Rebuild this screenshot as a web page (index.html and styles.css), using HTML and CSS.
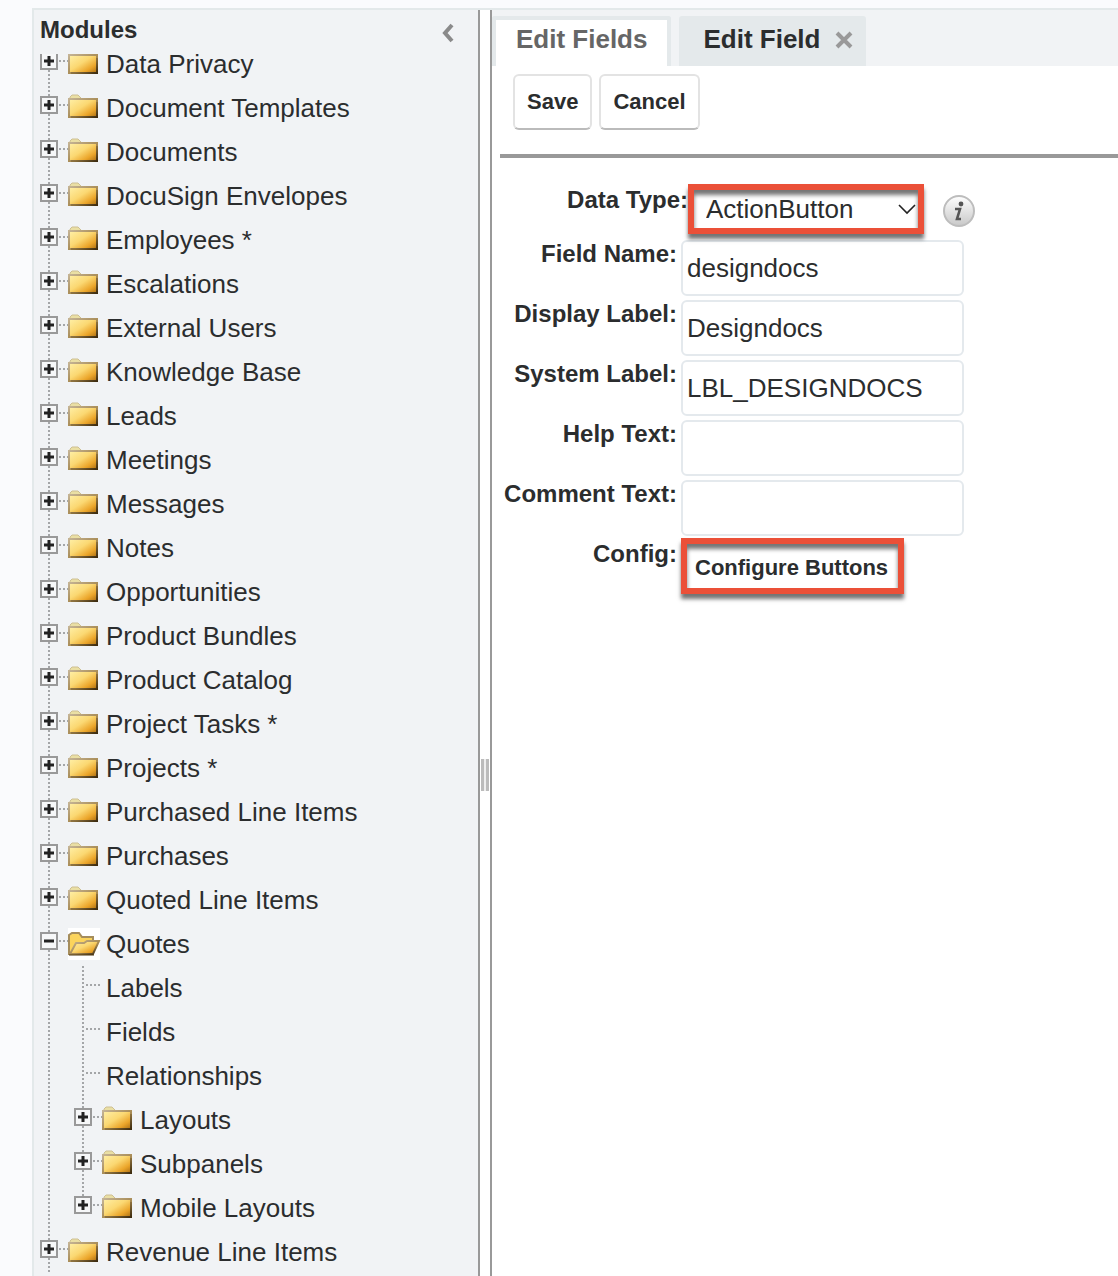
FILE: index.html
```html
<!DOCTYPE html>
<html lang="en">
<head>
    <meta charset="UTF-8">
    <meta name="viewport" content="width=device-width, initial-scale=1.0">
    <title>Studio - Edit Field</title>
    <link rel="stylesheet" href="styles.css">
</head>
<body>
    <!-- Shared tree icons -->
    <svg class="sprites" aria-hidden="true">
        <defs>
            <linearGradient id="gold" x1="0" y1="0" x2="1" y2="1">
                <stop offset="0" stop-color="#fff0a8"/>
                <stop offset="0.45" stop-color="#fbd872"/>
                <stop offset="0.75" stop-color="#eba52a"/>
                <stop offset="1" stop-color="#a86c12"/>
            </linearGradient>
            <linearGradient id="edge" x1="0" y1="0" x2="1" y2="1">
                <stop offset="0" stop-color="#c4b394"/>
                <stop offset="0.6" stop-color="#a5874e"/>
                <stop offset="1" stop-color="#3a2a10"/>
            </linearGradient>
            <linearGradient id="silver" x1="0" y1="0" x2="0" y2="1">
                <stop offset="0" stop-color="#ffffff"/>
                <stop offset="1" stop-color="#c8c8c8"/>
            </linearGradient>
        </defs>
        <symbol id="plus" viewBox="0 0 34 44">
            <path class="dots" d="M15 0V44M25 19H34"/>
            <rect class="box" x="7" y="11" width="16" height="16"/>
            <path class="sign" d="M10 19H20M15 14V24"/>
        </symbol>
        <symbol id="plus-last" viewBox="0 0 34 44">
            <path class="dots" d="M15 0V11M25 19H34"/>
            <rect class="box" x="7" y="11" width="16" height="16"/>
            <path class="sign" d="M10 19H20M15 14V24"/>
        </symbol>
        <symbol id="minus" viewBox="0 0 34 44">
            <path class="dots" d="M15 0V44M25 19H34"/>
            <rect class="box" x="7" y="11" width="16" height="16"/>
            <path class="sign" d="M10 19H20"/>
        </symbol>
        <symbol id="line" viewBox="0 0 34 44">
            <path class="dots" d="M15 0V44"/>
        </symbol>
        <symbol id="branch" viewBox="0 0 34 44">
            <path class="dots" d="M15 0V44M18 19H32"/>
        </symbol>
        <symbol id="folder" viewBox="0 0 34 44">
            <path d="M2 13V11L4 9H10L13 12V13Z" fill="#eadfa4" stroke="#cdbf92"/>
            <rect x="1" y="13" width="28" height="18" fill="url(#gold)" stroke="url(#edge)" stroke-width="2"/>
            <path d="M3 31H29V16" fill="none" stroke="#4a3510" stroke-opacity="0.55"/>
        </symbol>
        <symbol id="folder-open" viewBox="0 0 34 44">
            <rect x="0" y="6" width="32" height="32" fill="#fff"/>
            <path d="M1 32V13L4 11H11L14 15H25V19L20 32Z" fill="#fbd45c" stroke="#a58d5c" stroke-width="2"/>
            <path d="M2 32L8 21H16L19 19H31L25 32Z" fill="url(#gold)" stroke="url(#edge)" stroke-width="2"/>
            <path d="M1 33H26" stroke="#4a3510"/>
        </symbol>
    </svg>

    <div class="studio">
        <aside class="sidebar">
            <div class="sidebar-header">
                <h2>Modules</h2>
                <button class="collapse" type="button" aria-label="Collapse">
                    <svg width="14" height="20" viewBox="0 0 14 20"><path d="M12 2L5 10L12 18" fill="none" stroke="#8a8a8a" stroke-width="4"/></svg>
                </button>
            </div>
            <nav class="tree-view">
                <ul class="tree" id="tree"></ul>
            </nav>
        </aside>

        <div class="splitter"><span class="grip"></span></div>

        <main class="panel">
            <div class="tabs">
                <a class="tab active" href="#fields">Edit Fields</a>
                <div class="tab">
                    <a href="#field">Edit Field</a>
                    <button class="close" type="button" aria-label="Close tab">
                        <svg width="20" height="20" viewBox="0 0 20 20"><path d="M3 4L17 18M17 4L3 18" stroke="#999" stroke-width="4"/></svg>
                    </button>
                </div>
            </div>

            <form class="editor">
                <div class="toolbar">
                    <button class="btn" type="button">Save</button>
                    <button class="btn" type="button">Cancel</button>
                </div>
                <hr>
                <div class="fields">
                    <div class="field wide">
                        <label for="type">Data Type:</label>
                        <div class="select highlight">
                            <select id="type"><option>ActionButton</option></select>
                            <svg class="chevron" width="18" height="12" viewBox="0 0 18 12"><path d="M1 1L9 9L17 1" fill="none" stroke="#222" stroke-width="1.6"/></svg>
                        </div>
                        <button class="info" type="button" aria-label="Help">
                            <svg width="34" height="34" viewBox="0 0 34 34">
                                <circle cx="17" cy="17" r="15" fill="url(#silver)" stroke="#bdbdbd" stroke-width="2"/>
                                <circle cx="19" cy="10" r="2.4" fill="#555"/>
                                <path d="M13 15H18L15 25H19" fill="none" stroke="#555" stroke-width="2.6"/>
                            </svg>
                        </button>
                    </div>
                    <div class="field">
                        <label for="name">Field Name:</label>
                        <input id="name" type="text" value="designdocs">
                    </div>
                    <div class="field">
                        <label for="display">Display Label:</label>
                        <input id="display" type="text" value="Designdocs">
                    </div>
                    <div class="field">
                        <label for="system">System Label:</label>
                        <input id="system" type="text" value="LBL_DESIGNDOCS">
                    </div>
                    <div class="field">
                        <label for="help">Help Text:</label>
                        <input id="help" type="text">
                    </div>
                    <div class="field">
                        <label for="comment">Comment Text:</label>
                        <input id="comment" type="text">
                    </div>
                    <div class="field">
                        <label for="config">Config:</label>
                        <button class="configure highlight" id="config" type="button">Configure Buttons</button>
                    </div>
                </div>
            </form>
        </main>
    </div>

    <script src="tree.js"></script>
</body>
</html>
```

FILE: styles.css
```css
* {
    box-sizing: border-box;
}

body {
    margin: 0;
    padding: 8px 0 0 32px;
    height: 100vh;
    overflow: hidden;
    background: #fafbfd;
    color: #2b2d2e;
    font-family: "Liberation Sans", Arial, sans-serif;
    font-size: 26px;
}

a {
    color: inherit;
    text-decoration: none;
}

button {
    padding: 0;
    border: 0;
    background: none;
    color: inherit;
    font-family: inherit;
    cursor: pointer;
}

svg {
    display: block;
}

.sprites {
    position: absolute;
    width: 0;
    height: 0;
}

.studio {
    display: flex;
    height: 100%;
    border-top: 2px solid #e3e9ea;
}

/* Sidebar */
.sidebar {
    display: flex;
    flex-direction: column;
    flex: 0 0 446px;
    border-left: 2px solid #e3e9ea;
    background: #f1f3f5;
}

.sidebar-header {
    display: flex;
    flex: 0 0 44px;
    align-items: center;
    justify-content: space-between;
    padding: 0 24px 4px 6px;
}

.sidebar-header h2 {
    margin: 0;
    font-size: 24px;
}

.collapse {
    padding-top: 6px;
}

.tree-view {
    flex: 1;
    min-height: 0;
    overflow: hidden;
}

.tree,
.tree ul {
    margin: 0;
    padding: 0;
    list-style: none;
}

/* scrolled part of the way into the first row */
.tree {
    margin-top: -12px;
}

.row {
    display: flex;
    height: 44px;
    line-height: 44px;
    white-space: nowrap;
}

.cell {
    flex: none;
    width: 34px;
    height: 44px;
}

.row a {
    padding-left: 4px;
}

.dots {
    fill: none;
    stroke: #a4a6a8;
    stroke-width: 2;
    stroke-dasharray: 2 2;
}

.box {
    fill: #f6f7f8;
    stroke: #999;
    stroke-width: 2;
}

.sign {
    fill: none;
    stroke: #222;
    stroke-width: 3;
}

/* Splitter */
.splitter {
    display: flex;
    flex: 0 0 14px;
    align-items: center;
    justify-content: center;
    border: solid #999;
    border-width: 0 2px;
    background: #fff;
}

.grip {
    width: 8px;
    height: 32px;
    margin-top: 264px;
    border: solid #bbb;
    border-width: 0 3px;
    background: #eee;
}

/* Right panel */
.panel {
    flex: 1;
    min-width: 0;
    background: #fff;
}

.tabs {
    display: flex;
    gap: 8px;
    height: 56px;
    padding-top: 6px;
    background: #f1f3f5;
    font-weight: bold;
    line-height: 46px;
}

.tab {
    display: flex;
    align-items: center;
    gap: 14px;
    padding: 0 12px 4px 24px;
    border-radius: 3px 3px 0 0;
    background: #e4e9eb;
}

.tab.active {
    padding: 0 20px 8px;
    border: solid #e4e9eb;
    border-width: 4px 4px 0;
    background: #fff;
    color: #666;
    line-height: 38px;
}

.toolbar {
    display: flex;
    gap: 7px;
    padding: 8px 21px 24px;
}

.btn {
    height: 56px;
    padding: 0 12px;
    border: 2px solid #e3e3e3;
    border-bottom-color: #bbb;
    border-radius: 6px;
    background: #fff;
    font-size: 22px;
    font-weight: bold;
}

hr {
    height: 4px;
    margin: 0 0 28px 8px;
    border: 0;
    background: #999;
}

.fields {
    display: flex;
    flex-direction: column;
    gap: 4px;
}

.field {
    display: grid;
    grid-template-columns: 185px 283px;
    column-gap: 4px;
    align-items: start;
}

.field.wide {
    grid-template-columns: 196px 236px auto;
    justify-content: start;
    column-gap: 0;
}

.field label {
    font-size: 24px;
    font-weight: bold;
    line-height: 28px;
    text-align: right;
}

.field input {
    width: 100%;
    height: 56px;
    padding: 0 4px;
    border: 2px solid #e4e9ed;
    border-radius: 6px;
    background: #fff;
    color: inherit;
    font: inherit;
}

.select select {
    width: 100%;
    height: 50px;
    padding: 0 30px 4px 18px;
    border: 0;
    background: #fff;
    color: inherit;
    font: inherit;
    appearance: none;
}

.chevron {
    position: absolute;
    top: 18px;
    right: 8px;
    pointer-events: none;
}

.info {
    margin: 8px 0 0 18px;
}

.configure {
    justify-self: start;
    height: 56px;
    padding: 0 16px 0 14px;
    font-size: 22px;
    font-weight: bold;
}

/* Red callout frame drawn over a control */
.highlight {
    position: relative;
}

.highlight::after {
    content: "";
    position: absolute;
    z-index: 1;
    inset: -2px 0 2px;
    border: 6px solid #eb5038;
    box-shadow: 0 5px 4px rgba(0, 0, 0, 0.55), inset 0 5px 4px rgba(0, 0, 0, 0.55);
    pointer-events: none;
}
```

FILE: tree.js
```js
const modules = [
    'Data Privacy', 'Document Templates', 'Documents', 'DocuSign Envelopes',
    'Employees *', 'Escalations', 'External Users', 'Knowledge Base', 'Leads',
    'Meetings', 'Messages', 'Notes', 'Opportunities', 'Product Bundles',
    'Product Catalog', 'Project Tasks *', 'Projects *', 'Purchased Line Items',
    'Purchases', 'Quoted Line Items', 'Quotes', 'Revenue Line Items'
];

const quoteItems = [
    ['Labels', 'branch'],
    ['Fields', 'branch'],
    ['Relationships', 'branch'],
    ['Layouts', 'plus'],
    ['Subpanels', 'plus'],
    ['Mobile Layouts', 'plus-last']
];

function icon(name) {
    return `<svg class="cell"><use href="#${name}"/></svg>`;
}

function toggle(name, text) {
    return `<button class="cell" type="button" aria-label="Toggle ${text}">${icon(name)}</button>`;
}

function moduleRow(text) {
    const open = text === 'Quotes';
    const children = open ? `<ul>${quoteItems.map(childRow).join('')}</ul>` : '';
    return `<li><div class="row">${toggle(open ? 'minus' : 'plus', text)}${icon(open ? 'folder-open' : 'folder')}<a href="#">${text}</a></div>${children}</li>`;
}

function childRow([text, type]) {
    const connector = type === 'branch' ? icon(type) : toggle(type, text) + icon('folder');
    return `<li><div class="row">${icon('line')}${connector}<a href="#">${text}</a></div></li>`;
}

document.getElementById('tree').innerHTML = modules.map(moduleRow).join('');
```
